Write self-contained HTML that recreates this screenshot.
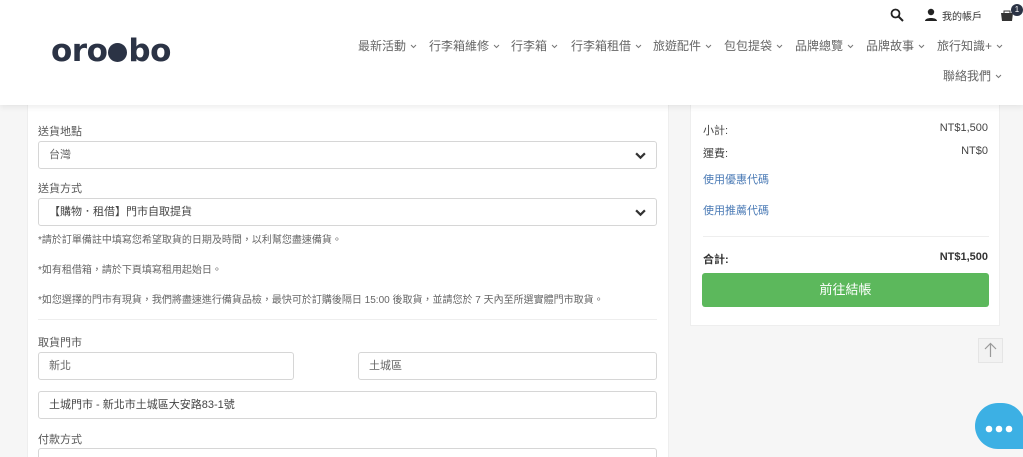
<!DOCTYPE html>
<html><head><meta charset="utf-8"><style>
*{box-sizing:border-box;margin:0;padding:0}
html,body{width:1023px;height:457px;overflow:hidden}
body{background:#f6f6f6;font-family:"Liberation Sans","Noto Sans CJK TC",sans-serif;color:#444;position:relative}
.hdr{position:absolute;left:0;top:0;width:1023px;height:105px;background:#fff;box-shadow:0 2px 6px rgba(0,0,0,.08);z-index:2}
.abs{position:absolute;white-space:nowrap}
.nav{font-size:12px;color:#666;top:37px}
.nav svg{margin-left:4px;vertical-align:1px}
.card{position:absolute;background:#fff;border:1px solid #eee}
.lbl{font-size:11px;color:#555;position:absolute;left:10px}
.inp{position:absolute;border:1px solid #d6d6d6;border-radius:3px;height:28px;font-size:11px;color:#666;padding:0 10px;line-height:26px;background:#fff}
.note{font-size:10px;color:#666;position:absolute;left:10px}
.chev{position:absolute;right:10px;top:8px}
</style></head><body>
<div class="hdr">
 <div class="abs" style="left:51px;top:33px;font-size:31px;font-weight:bold;color:#2b3345;letter-spacing:-0.5px;font-family:'DejaVu Sans',sans-serif;line-height:36px">oro<span style="display:inline-block;width:19px;height:19px;border-radius:50%;background:#2b3345;vertical-align:-1px;margin:0 1px"></span>bo</div>
 <svg class="abs" style="left:890px;top:8px" width="14" height="14" viewBox="0 0 14 14"><circle cx="5.5" cy="5.5" r="4" fill="none" stroke="#222" stroke-width="1.8"/><path d="M8.5 8.5L13 13" stroke="#222" stroke-width="2"/></svg>
 <svg class="abs" style="left:924px;top:8px" width="14" height="14" viewBox="0 0 14 14"><circle cx="7" cy="4" r="3.2" fill="#222"/><path d="M1 13c0-4 12-4 12 0z" fill="#222"/></svg>
 <div class="abs" style="left:942px;top:8px;font-size:10px;color:#333">我的帳戶</div>
 <svg class="abs" style="left:1000px;top:9px" width="14" height="12" viewBox="0 0 14 12"><path d="M1 4h12l-1 8H2z" fill="#333"/><path d="M4 4V2h6v2" stroke="#333" fill="none"/></svg>
 <div class="abs" style="left:1011px;top:4px;width:12px;height:12px;border-radius:50%;background:#2b3345;color:#fff;font-size:8px;text-align:center;line-height:12px">1</div>
 <div class="abs nav" style="left:358px">最新活動<svg width="7" height="5"><path d="M1 1l2.5 2.5L6 1" stroke="#777" fill="none"/></svg></div>
 <div class="abs nav" style="left:429px">行李箱維修<svg width="7" height="5"><path d="M1 1l2.5 2.5L6 1" stroke="#777" fill="none"/></svg></div>
 <div class="abs nav" style="left:511px">行李箱<svg width="7" height="5"><path d="M1 1l2.5 2.5L6 1" stroke="#777" fill="none"/></svg></div>
 <div class="abs nav" style="left:571px">行李箱租借<svg width="7" height="5"><path d="M1 1l2.5 2.5L6 1" stroke="#777" fill="none"/></svg></div>
 <div class="abs nav" style="left:653px">旅遊配件<svg width="7" height="5"><path d="M1 1l2.5 2.5L6 1" stroke="#777" fill="none"/></svg></div>
 <div class="abs nav" style="left:724px">包包提袋<svg width="7" height="5"><path d="M1 1l2.5 2.5L6 1" stroke="#777" fill="none"/></svg></div>
 <div class="abs nav" style="left:795px">品牌總覽<svg width="7" height="5"><path d="M1 1l2.5 2.5L6 1" stroke="#777" fill="none"/></svg></div>
 <div class="abs nav" style="left:866px">品牌故事<svg width="7" height="5"><path d="M1 1l2.5 2.5L6 1" stroke="#777" fill="none"/></svg></div>
 <div class="abs nav" style="left:937px">旅行知識+<svg width="7" height="5"><path d="M1 1l2.5 2.5L6 1" stroke="#777" fill="none"/></svg></div>
 <div class="abs nav" style="left:943px;top:67px">聯絡我們<svg width="7" height="5"><path d="M1 1l2.5 2.5L6 1" stroke="#777" fill="none"/></svg></div>
</div>
<div class="card" style="left:27px;top:100px;width:642px;height:370px">
 <div class="lbl" style="top:22px">送貨地點</div>
 <div class="inp" style="left:10px;top:40px;width:619px">台灣<svg class="chev" width="11" height="11" viewBox="0 0 10 10"><path d="M1 3l4 4 4-4" stroke="#333" stroke-width="2" fill="none"/></svg></div>
 <div class="lbl" style="top:79px">送貨方式</div>
 <div class="inp" style="left:10px;top:97px;width:619px;color:#444">【購物．租借】門市自取提貨<svg class="chev" width="11" height="11" viewBox="0 0 10 10"><path d="M1 3l4 4 4-4" stroke="#333" stroke-width="2" fill="none"/></svg></div>
 <div class="note" style="top:130px">*請於訂單備註中填寫您希望取貨的日期及時間，以利幫您盡速備貨。</div>
 <div class="note" style="top:160px">*如有租借箱，請於下頁填寫租用起始日。</div>
 <div class="note" style="top:190px">*如您選擇的門市有現貨，我們將盡速進行備貨品檢，最快可於訂購後隔日 15:00 後取貨，並請您於 7 天內至所選實體門市取貨。</div>
 <div style="position:absolute;left:10px;top:218px;width:619px;border-top:1px solid #eee"></div>
 <div class="lbl" style="top:233px">取貨門市</div>
 <div class="inp" style="left:10px;top:251px;width:256px">新北</div>
 <div class="inp" style="left:330px;top:251px;width:299px">土城區</div>
 <div class="inp" style="left:10px;top:290px;width:619px;color:#444">土城門市 - 新北市土城區大安路83-1號</div>
 <div class="lbl" style="top:330px">付款方式</div>
 <div class="inp" style="left:10px;top:347px;width:619px"></div>
</div>
<div class="card" style="left:690px;top:100px;width:310px;height:226px">
 <div class="abs" style="left:12px;top:21px;font-size:11px">小計:</div>
 <div class="abs" style="right:11px;top:21px;font-size:11px">NT$1,500</div>
 <div class="abs" style="left:12px;top:44px;font-size:11px">運費:</div>
 <div class="abs" style="right:11px;top:44px;font-size:11px">NT$0</div>
 <div class="abs" style="left:12px;top:70px;font-size:11px;color:#4a7ab5">使用優惠代碼</div>
 <div class="abs" style="left:12px;top:101px;font-size:11px;color:#4a7ab5">使用推薦代碼</div>
 <div style="position:absolute;left:12px;top:135px;width:286px;border-top:1px solid #eee"></div>
 <div class="abs" style="left:12px;top:150px;font-size:11px;font-weight:bold;color:#333">合計:</div>
 <div class="abs" style="right:11px;top:150px;font-size:11px;font-weight:bold;color:#333">NT$1,500</div>
 <div class="abs" style="left:11px;top:172px;width:287px;height:34px;background:#5cb85c;border-radius:3px;color:#fff;font-size:13px;text-align:center;line-height:34px">前往結帳</div>
</div>
<div class="abs" style="left:978px;top:338px;width:25px;height:25px;background:#f2f2f2;border:1px solid #e5e5e5"><svg width="23" height="23" viewBox="0 0 23 23"><path d="M11.5 5v13M6 10l5.5-5.5L17 10" stroke="#999" stroke-width="1.2" fill="none"/></svg></div>
<div class="abs" style="left:975px;top:403px;width:50px;height:46px;background:#3cb0e4;border-radius:23px 23px 0 23px"></div>
<div class="abs" style="left:985px;top:421px;width:34px;height:10px"><svg width="34" height="10"><circle cx="4" cy="5" r="3.3" fill="#fff"/><circle cx="14" cy="5" r="3.3" fill="#fff"/><circle cx="24" cy="5" r="3.3" fill="#fff"/></svg></div>
</body></html>
